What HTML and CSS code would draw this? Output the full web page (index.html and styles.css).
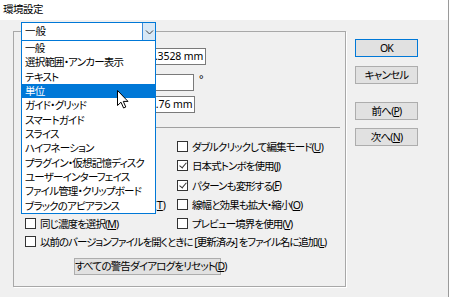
FILE: index.html
```html
<!DOCTYPE html>
<html lang="ja">
<head>
    <meta charset="UTF-8">
    <title>環境設定</title>
    <link rel="stylesheet" href="styles.css">
</head>
<body>
    <div class="window">
        <div class="titlebar">環境設定</div>
        <div class="dialog">
            <div class="group">
                <div class="combo">
                    <span class="combo-text">一般</span>
                    <span class="combo-btn">
                        <svg width="9" height="6" viewBox="0 0 9 6"><path d="M1 1.5 L4.5 5 L8 1.5" fill="none" stroke="#404040" stroke-width="1"/></svg>
                    </span>
                </div>

                <!-- labels sit under the open list, so only the fields show -->
                <div class="field-row first">
                    <span class="field-label"></span>
                    <span class="field w60">0.3528 mm</span>
                </div>
                <div class="field-row second">
                    <span class="field-label"></span>
                    <span class="field w48"></span>
                    <span class="unit">°</span>
                </div>
                <div class="field-row third">
                    <span class="field-label"></span>
                    <span class="field w56">12.76 mm</span>
                </div>

                <div class="separator"></div>

                <div class="checks">
                    <span></span>
                    <label class="check"><span class="box"></span>ダブルクリックして編集モード(<u>U</u>)</label>
                    <span></span>
                    <label class="check"><span class="box checked"></span>日本式トンボを使用(<u>J</u>)</label>
                    <span></span>
                    <label class="check"><span class="box checked"></span>パターンも変形する(<u>F</u>)</label>
                    <label class="check tail">(<u>T</u>)</label>
                    <label class="check"><span class="box"></span>線幅と効果も拡大・縮小(<u>O</u>)</label>
                    <label class="check"><span class="box"></span>同じ濃度を選択(<u>M</u>)</label>
                    <label class="check"><span class="box"></span>プレビュー境界を使用(<u>V</u>)</label>
                </div>
                <label class="check wide"><span class="box"></span>以前のバージョンファイルを開くときに [更新済み] をファイル名に追加(<u>L</u>)</label>

                <div class="reset-row">
                    <button class="btn reset">すべての警告ダイアログをリセット(<u>D</u>)</button>
                </div>

                <ul class="dropdown">
                    <li>一般</li>
                    <li>選択範囲・アンカー表示</li>
                    <li>テキスト</li>
                    <li class="selected">単位</li>
                    <li>ガイド・グリッド</li>
                    <li>スマートガイド</li>
                    <li>スライス</li>
                    <li>ハイフネーション</li>
                    <li>プラグイン・仮想記憶ディスク</li>
                    <li>ユーザーインターフェイス</li>
                    <li>ファイル管理・クリップボード</li>
                    <li>ブラックのアピアランス</li>
                </ul>

                <svg class="cursor" width="12" height="19" viewBox="0 0 12 19">
                    <path d="M0.5 0.5 L0.5 15.5 L4 12.2 L6.6 18 L8.8 17 L6.3 11.4 L11 11.4 Z" fill="#fff" stroke="#000" stroke-width="1" stroke-linejoin="round"/>
                </svg>
            </div>

            <div class="buttons">
                <button class="btn default">OK</button>
                <button class="btn">キャンセル</button>
                <button class="btn spaced">前へ(<u>P</u>)</button>
                <button class="btn">次へ(<u>N</u>)</button>
            </div>
        </div>
    </div>
</body>
</html>
```

FILE: styles.css
```css
body {
    margin: 0;
    background: #fff;
    font-family: "Noto Sans", "Noto Sans CJK JP", sans-serif;
    font-size: 10.5px;
    font-feature-settings: "palt";
    color: #000;
}
.window {
    width: 448px;
    height: 297px;
    border-right: 1px solid #9a9a9a;
    background: #f0f0f0;
    overflow: hidden;
}
.titlebar {
    height: 20px;
    line-height: 18px;
    padding-left: 3px;
    background: #fff;
    letter-spacing: -0.5px;
}
.dialog {
    display: flex;
    align-items: flex-start;
    gap: 9px;
    padding: 11px 0 0 13px;
}
.group {
    position: relative;
    box-sizing: border-box;
    width: 333px;
    height: 256px;
    border: 1px solid #a8a8a8;
    box-shadow: 1px 1px 0 #fff;
    padding-left: 7px;
}
.combo {
    display: flex;
    box-sizing: border-box;
    width: 135px;
    height: 19px;
    margin-top: -10px;
    border: 1px solid #0078d7;
    background: #fff;
}
.combo-text {
    flex: 1;
    padding-left: 3px;
    line-height: 16px;
}
.combo-btn {
    display: flex;
    align-items: center;
    justify-content: center;
    width: 12px;
    background: #d8e8f6;
    border-left: 1px solid #3c8ad8;
}
.field-row {
    display: flex;
    align-items: center;
    height: 17px;
}
.field-row.first { margin-top: 7px; }
.field-row.second { margin-top: 9px; }
.field-row.third { margin-top: 5px; }
.field-label {
    width: 124px;
}
.field-row.third .field-label {
    width: 119px;
}
.field {
    box-sizing: border-box;
    height: 17px;
    line-height: 15px;
    padding-left: 3px;
    border: 1px solid #7a7a7a;
    background: #fff;
    white-space: nowrap;
    overflow: hidden;
    letter-spacing: -0.1px;
}
.w60 { width: 61px; }
.w48 { width: 49px; }
.w56 { width: 55px; }
.unit {
    align-self: flex-start;
    margin-left: 5px;
    line-height: 10px;
}
.separator {
    height: 0;
    margin: 14px 5px 0 0;
    border-top: 1px solid #a0a0a0;
}
.checks {
    display: grid;
    grid-template-columns: 152px 1fr;
    grid-auto-rows: 19.3px;
    margin: 9px 0 0 4px;
}
.check {
    display: flex;
    align-items: center;
    white-space: nowrap;
    letter-spacing: -0.9px;
}
.check.tail {
    justify-content: flex-end;
    padding-right: 11px;
    letter-spacing: 0;
}
.check.wide {
    height: 17px;
    margin-left: 4px;
    letter-spacing: -1px;
}
.box {
    position: relative;
    flex-shrink: 0;
    box-sizing: border-box;
    width: 11px;
    height: 11px;
    margin-right: 4px;
    border: 1px solid #333;
    background: #fff;
}
.box.checked::after {
    content: "";
    position: absolute;
    left: 3px;
    top: 0px;
    width: 3px;
    height: 6px;
    border: solid #333;
    border-width: 0 1px 1px 0;
    transform: rotate(40deg);
}
.reset-row {
    margin: 8px 0 0 53px;
}
.btn {
    box-sizing: border-box;
    height: 18px;
    padding: 0;
    border: 1px solid #adadad;
    background: #e1e1e1;
    font: inherit;
    font-feature-settings: "palt";
    color: #000;
    line-height: 15px;
    white-space: nowrap;
    letter-spacing: -0.8px;
}
.btn.reset {
    width: 147px;
    height: 17px;
}
.btn.default {
    border-color: #0078d7;
}
.buttons {
    display: flex;
    flex-direction: column;
    gap: 9px;
    width: 63px;
    margin-top: 8px;
}
.buttons .btn {
    width: 63px;
}
.buttons .spaced {
    margin-top: 9px;
}
.buttons .spaced + .btn {
    margin-top: -1px;
}
.dropdown {
    position: absolute;
    left: 7px;
    top: 8px;
    box-sizing: border-box;
    width: 135px;
    height: 174px;
    margin: 0;
    padding: 0;
    list-style: none;
    border: 1px solid #0078d7;
    background: #fff;
}
.dropdown li {
    height: 14.33px;
    line-height: 14px;
    padding-left: 3px;
    white-space: nowrap;
    letter-spacing: -0.8px;
}
.dropdown li.selected {
    background: #0078d7;
    color: #fff;
}
.cursor {
    position: absolute;
    left: 103px;
    top: 58px;
}
```
